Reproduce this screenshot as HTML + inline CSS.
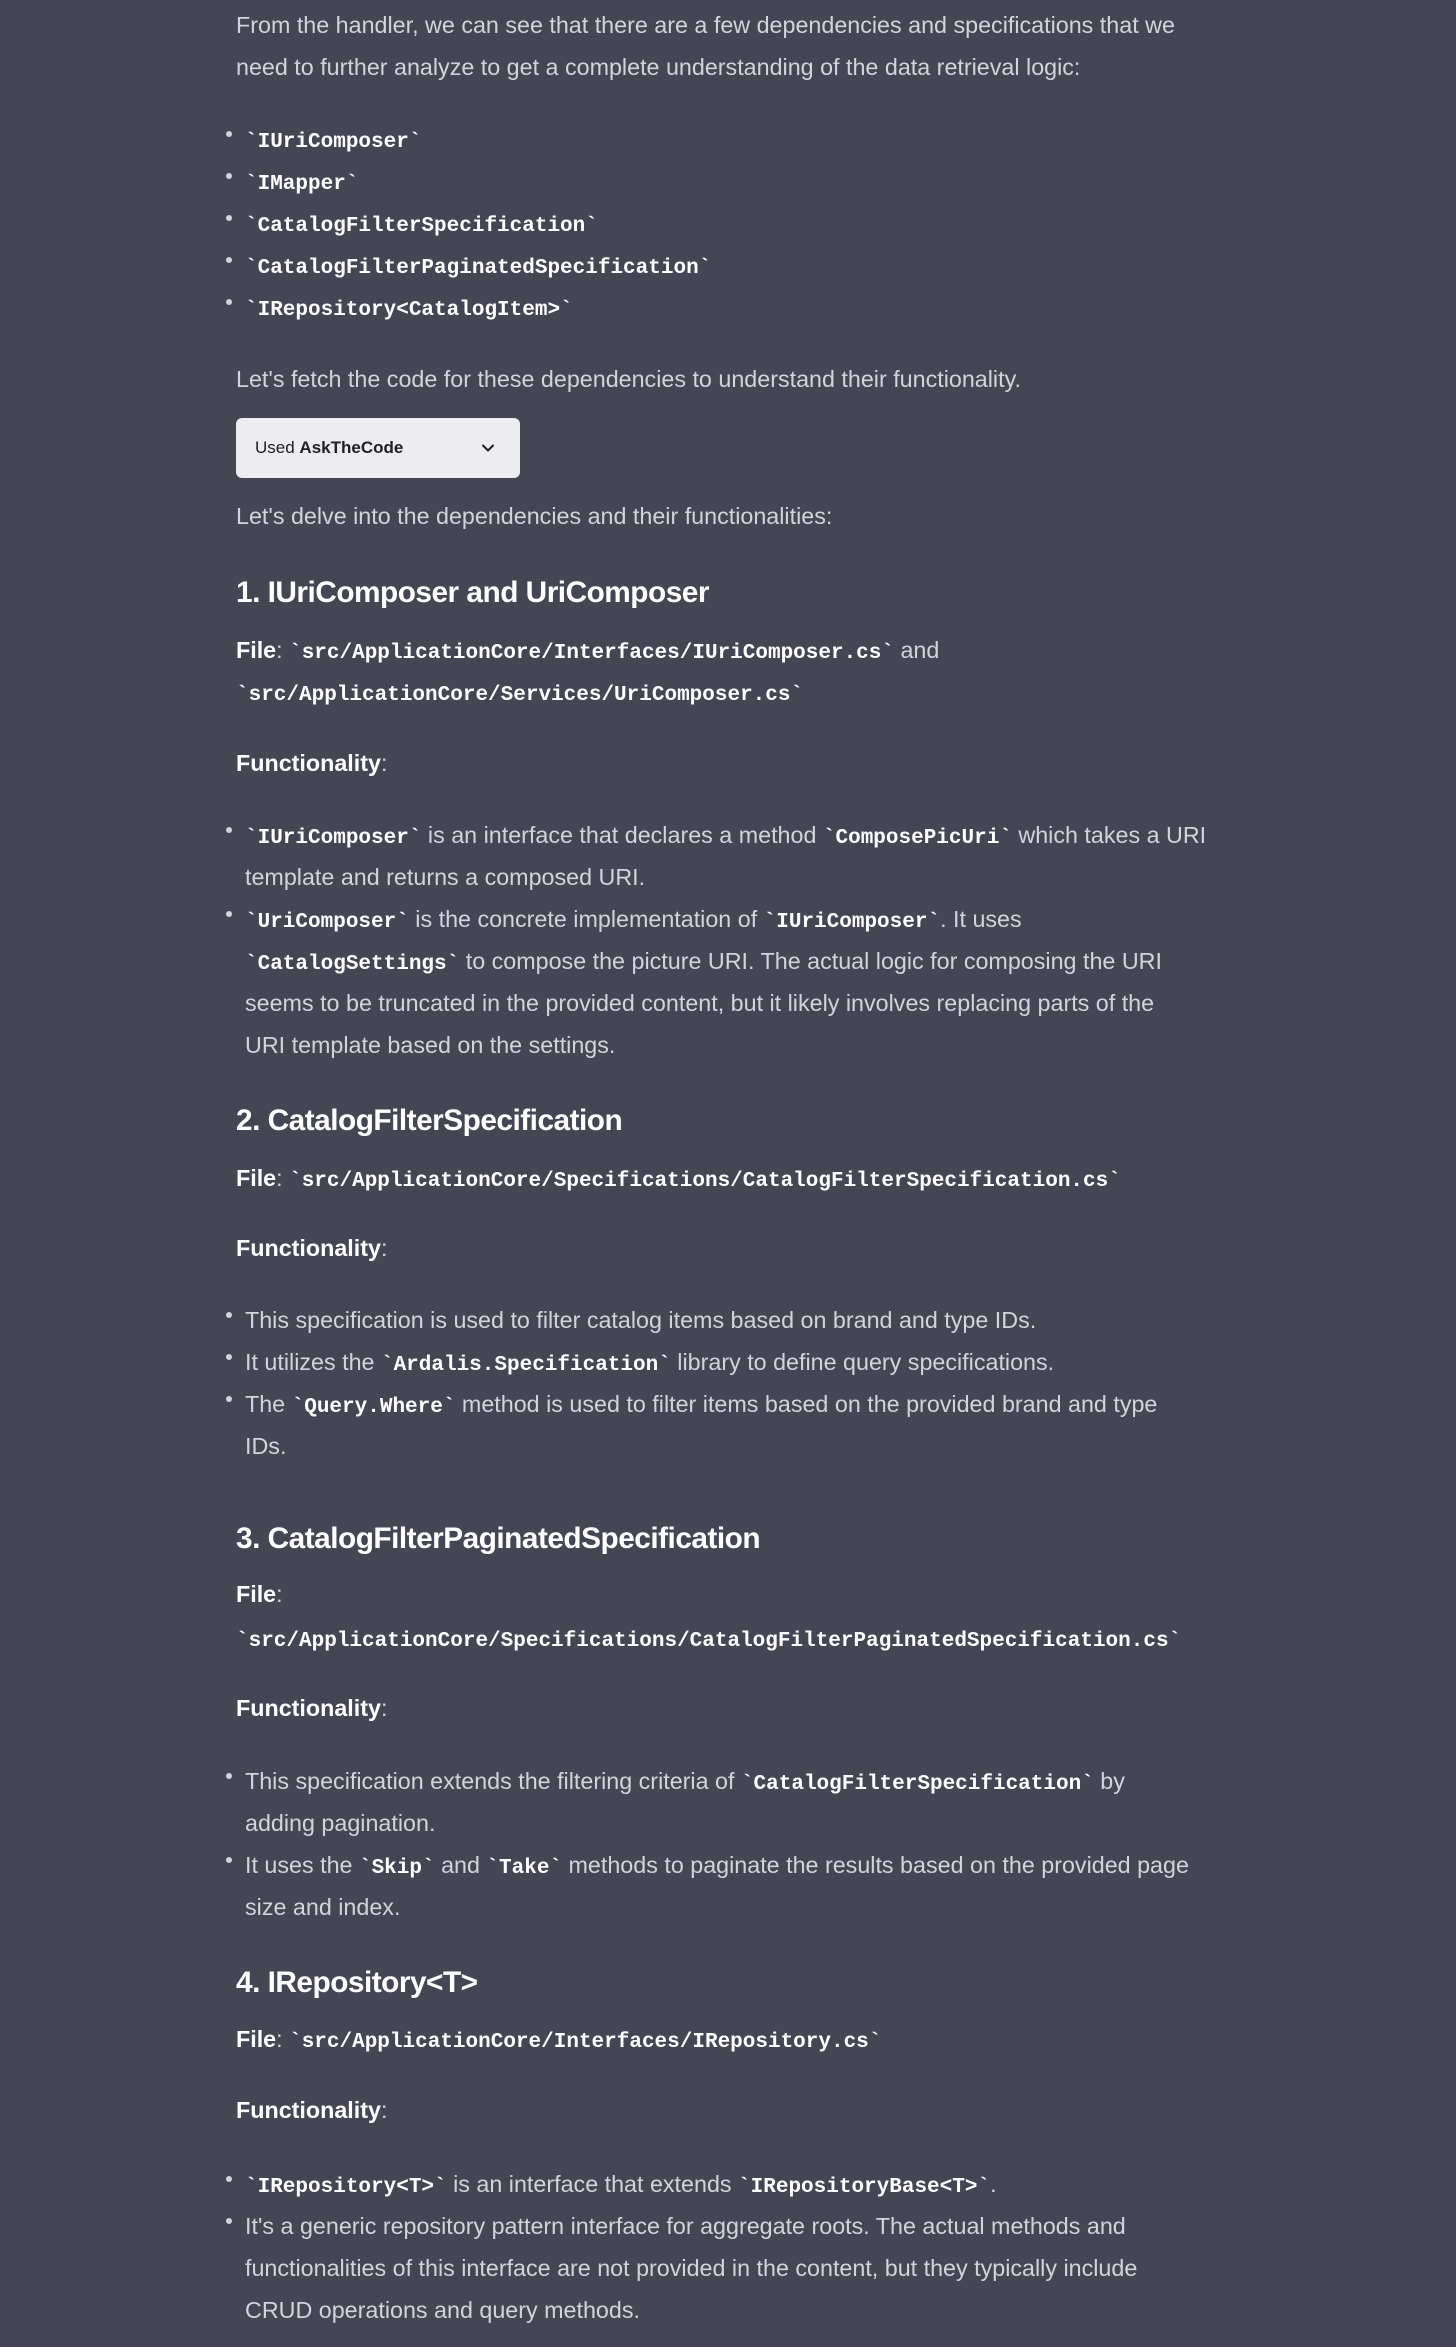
<!DOCTYPE html>
<html><head><meta charset="utf-8"><style>
html,body{margin:0;padding:0;background:#444654;width:1456px;height:2347px;overflow:hidden}
body{position:relative;font-family:"Liberation Sans",sans-serif;font-size:23.3px;color:#d1d5db}
.l{position:absolute;left:236px;height:42px;line-height:42px;white-space:nowrap}
.b{left:245px}
.b::before{content:"";position:absolute;left:-19px;top:13px;width:6px;height:6px;border-radius:50%;background:#d1d5db}
code{font-family:"Liberation Mono",monospace;font-weight:bold;color:#fff;font-size:21px}
strong{color:#fff;font-weight:bold}
h3{position:absolute;left:236px;margin:0;height:44px;line-height:44px;font-size:29.8px;font-weight:bold;color:#fff;white-space:nowrap;letter-spacing:-0.5px}
.btn{position:absolute;left:236px;top:418px;width:284px;height:60px;background:#ececf1;border-radius:6px;color:#202123;font-size:17px;line-height:60px}
.btn span{position:absolute;left:19px}
.btn svg{position:absolute;left:244px;top:22px}
</style></head><body>
<div class="l" style="top:4px">From the handler, we can see that there are a few dependencies and specifications that we</div>
<div class="l" style="top:46px">need to further analyze to get a complete understanding of the data retrieval logic:</div>
<div class="l b" style="top:118px"><code>`IUriComposer`</code></div>
<div class="l b" style="top:160px"><code>`IMapper`</code></div>
<div class="l b" style="top:202px"><code>`CatalogFilterSpecification`</code></div>
<div class="l b" style="top:244px"><code>`CatalogFilterPaginatedSpecification`</code></div>
<div class="l b" style="top:286px"><code>`IRepository&lt;CatalogItem&gt;`</code></div>
<div class="l" style="top:358px">Let's fetch the code for these dependencies to understand their functionality.</div>
<div class="btn"><span>Used <b>AskTheCode</b></span><svg width="16" height="16" viewBox="0 0 16 16"><path d="M3 5.5l5 5 5-5" fill="none" stroke="#202123" stroke-width="2" stroke-linecap="round" stroke-linejoin="round"/></svg></div>
<div class="l" style="top:495px">Let's delve into the dependencies and their functionalities:</div>

<h3 style="top:571px">1. IUriComposer and UriComposer</h3>
<div class="l" style="top:629px"><strong>File</strong>: <code>`src/ApplicationCore/Interfaces/IUriComposer.cs`</code> and</div>
<div class="l" style="top:671px"><code>`src/ApplicationCore/Services/UriComposer.cs`</code></div>
<div class="l" style="top:742px"><strong>Functionality</strong>:</div>
<div class="l b" style="top:814px"><code>`IUriComposer`</code> is an interface that declares a method <code>`ComposePicUri`</code> which takes a URI</div>
<div class="l" style="top:856px;left:245px">template and returns a composed URI.</div>
<div class="l b" style="top:898px"><code>`UriComposer`</code> is the concrete implementation of <code>`IUriComposer`</code>. It uses</div>
<div class="l" style="top:940px;left:245px"><code>`CatalogSettings`</code> to compose the picture URI. The actual logic for composing the URI</div>
<div class="l" style="top:982px;left:245px">seems to be truncated in the provided content, but it likely involves replacing parts of the</div>
<div class="l" style="top:1024px;left:245px">URI template based on the settings.</div>

<h3 style="top:1099px">2. CatalogFilterSpecification</h3>
<div class="l" style="top:1157px"><strong>File</strong>: <code>`src/ApplicationCore/Specifications/CatalogFilterSpecification.cs`</code></div>
<div class="l" style="top:1227px"><strong>Functionality</strong>:</div>
<div class="l b" style="top:1299px">This specification is used to filter catalog items based on brand and type IDs.</div>
<div class="l b" style="top:1341px">It utilizes the <code>`Ardalis.Specification`</code> library to define query specifications.</div>
<div class="l b" style="top:1383px">The <code>`Query.Where`</code> method is used to filter items based on the provided brand and type</div>
<div class="l" style="top:1425px;left:245px">IDs.</div>

<h3 style="top:1517px">3. CatalogFilterPaginatedSpecification</h3>
<div class="l" style="top:1573px"><strong>File</strong>:</div>
<div class="l" style="top:1617px"><code>`src/ApplicationCore/Specifications/CatalogFilterPaginatedSpecification.cs`</code></div>
<div class="l" style="top:1687px"><strong>Functionality</strong>:</div>
<div class="l b" style="top:1760px">This specification extends the filtering criteria of <code>`CatalogFilterSpecification`</code> by</div>
<div class="l" style="top:1802px;left:245px">adding pagination.</div>
<div class="l b" style="top:1844px">It uses the <code>`Skip`</code> and <code>`Take`</code> methods to paginate the results based on the provided page</div>
<div class="l" style="top:1886px;left:245px">size and index.</div>

<h3 style="top:1961px">4. IRepository&lt;T&gt;</h3>
<div class="l" style="top:2018px"><strong>File</strong>: <code>`src/ApplicationCore/Interfaces/IRepository.cs`</code></div>
<div class="l" style="top:2089px"><strong>Functionality</strong>:</div>
<div class="l b" style="top:2163px"><code>`IRepository&lt;T&gt;`</code> is an interface that extends <code>`IRepositoryBase&lt;T&gt;`</code>.</div>
<div class="l b" style="top:2205px">It's a generic repository pattern interface for aggregate roots. The actual methods and</div>
<div class="l" style="top:2247px;left:245px">functionalities of this interface are not provided in the content, but they typically include</div>
<div class="l" style="top:2289px;left:245px">CRUD operations and query methods.</div>
</body></html>
